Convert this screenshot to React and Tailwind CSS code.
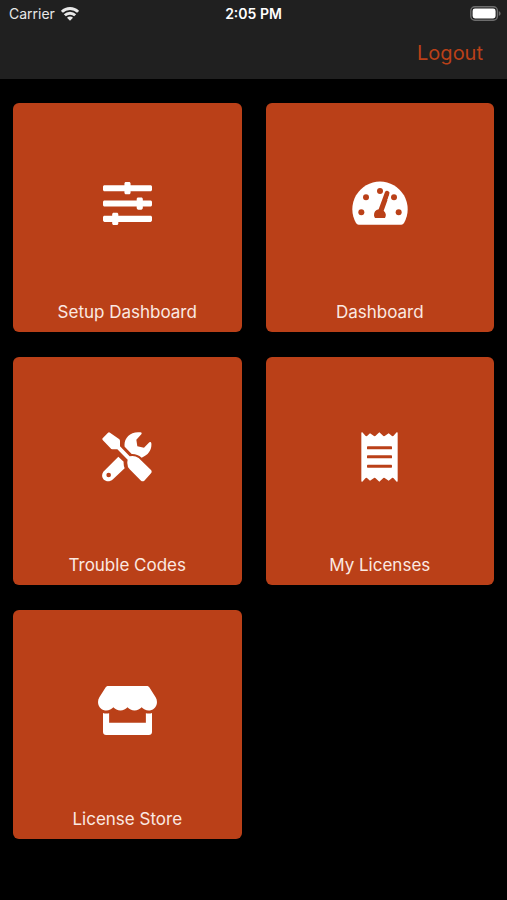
import React from 'react';
import { FaSlidersH, FaStore } from 'react-icons/fa';

function GaugeIcon() {
    return (
        <svg className="w-[56px] h-[49px]" viewBox="0 0 168 147" aria-hidden="true">
            <path d="M20 137Q15 137 12 132A83 83 0 1 1 156 132Q153 137 148 137Z" fill="currentColor" />
            <g className="fill-[#ba4018]">
                <circle cx="28" cy="100" r="9" />
                <circle cx="42" cy="55" r="9" />
                <circle cx="84" cy="36" r="9" />
                <circle cx="126" cy="55" r="9" />
                <circle cx="140" cy="100" r="9" />
                <path d="M69 117Q66 113 66 109A18 18 0 0 1 80 91L99 39Q102 34 108 36Q114 39 113 45L95 95A18 18 0 0 1 99 117Z" />
            </g>
            <path d="m114 40 5 5-8 20-5-2z" fill="currentColor" />
        </svg>
    );
}

function ToolsIcon() {
    return (
        <svg className="w-[50px] h-[50px]" viewBox="13 15 150 150" fill="currentColor" aria-hidden="true">
            <path d="M15 34 31 17Q34 15 37 17L64 36Q67 38 67 42V58L96 88Q110 84 123 93L160 129Q164 134 160 139L140 161Q135 165 130 161L96 127Q86 117 90 98L59 67H44Q40 67 38 63L15 39Q13 36 15 34Z" />
            <path d="M81 59C77 36 97 12 128 16Q134 17 131 22L116 38 119 58 139 62 155 46Q160 43 161 49C163 67 153 84 132 92Q118 80 102 81Z" />
            <path fillRule="evenodd" d="M62 89 78 104Q77 115 81 124L46 157C28 173 4 154 17 134ZM33 137a7 7 0 1 0 0 14 7 7 0 0 0 0-14Z" />
        </svg>
    );
}

function ReceiptIcon() {
    return (
        <svg className="w-[37px] h-[50px]" viewBox="0 0 111 150" aria-hidden="true">
            <path
                d="M1 3Q1 0 4 1L14 12Q16 13 18 12L27 4 39 12Q41 13 43 12L55 1 67 12Q69 13 71 12L83 4 93 12Q95 13 97 12L107 1Q110 0 110 3V147Q110 150 107 149L97 138Q95 137 93 138L83 146 71 138Q69 137 67 138L55 149 43 138Q41 137 39 138L27 146 18 138Q16 137 14 138L4 149Q1 150 1 147Z"
                fill="currentColor"
            />
            <g className="fill-[#ba4018]">
                <rect x="18" y="43" width="75" height="9" rx="2" />
                <rect x="18" y="70" width="75" height="9" rx="2" />
                <rect x="18" y="98" width="75" height="9" rx="2" />
            </g>
        </svg>
    );
}

function WifiIcon() {
    return (
        <svg className="w-[18px] h-[14px]" viewBox="0 0 18 14" fill="none" stroke="currentColor" strokeWidth="2.9" aria-hidden="true">
            <path d="M0.9 4.8a11.6 11.6 0 0 1 16.2 0" />
            <path d="M3.8 8.3a7.5 7.5 0 0 1 10.4 0" />
            <path d="M9 13.8 6 10.8a4.2 4.2 0 0 1 6 0z" fill="currentColor" stroke="none" />
        </svg>
    );
}

function BatteryIcon() {
    return (
        <svg className="w-[31px] h-[15px]" viewBox="0 0 31 15" aria-hidden="true">
            <rect x="0.8" y="0.8" width="26.6" height="13.4" rx="4" fill="none" stroke="#6d6d6d" strokeWidth="1.4" />
            <rect x="2.6" y="2.6" width="23" height="9.8" rx="2.4" fill="#fff" />
            <path d="M28.8 5.2c1.1.4 1.8 1.2 1.8 2.3s-.7 1.9-1.8 2.3z" fill="#6d6d6d" />
        </svg>
    );
}

const tiles = [
    { label: "Setup Dashboard", icon: <FaSlidersH className="w-[49px] h-[49px]" /> },
    { label: "Dashboard", icon: <GaugeIcon /> },
    { label: "Trouble Codes", icon: <ToolsIcon /> },
    { label: "My Licenses", icon: <ReceiptIcon /> },
    { label: "License Store", icon: <FaStore className="w-[59px] h-[49px]" /> }
];

function StatusBar() {
    return (
        <div className="grid grid-cols-3 items-center h-[27px] px-[6px] text-sm text-[#e8e8e8]">
            <div className="flex items-center gap-[6px] pl-[3px]">
                <span>Carrier</span>
                <WifiIcon />
            </div>
            <span className="text-center font-semibold text-white">2:05 PM</span>
            <div className="flex justify-end">
                <BatteryIcon />
            </div>
        </div>
    );
}

export default function App() {
    return (
        <div className="min-h-screen bg-black font-['Inter',sans-serif]">
            <header className="bg-[#202020]">
                <StatusBar />
                <div className="flex justify-end items-center h-[52px] pr-6">
                    <button type="button" className="text-xl leading-7 text-[#ba4018]">
                        Logout
                    </button>
                </div>
            </header>

            <main className="grid grid-cols-2 gap-x-6 gap-y-[25px] px-[13px] py-6">
                {tiles.map((tile) => (
                    <button
                        key={tile.label}
                        type="button"
                        className="flex flex-col items-center aspect-square pb-[10px] rounded-md bg-[#ba4018] text-white"
                    >
                        <span className="flex flex-1 items-center justify-center pt-[2px]">{tile.icon}</span>
                        <span className="text-[17px] leading-5 text-[#fbe9e2]">{tile.label}</span>
                    </button>
                ))}
            </main>
        </div>
    );
}
